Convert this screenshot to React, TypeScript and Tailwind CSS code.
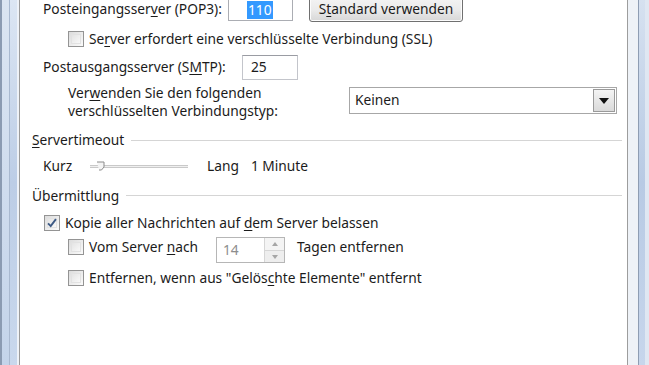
import React from "react";

const font = { fontFamily: '"Noto Sans", "Liberation Sans", sans-serif' };

function U({ children }: { children: React.ReactNode }) {
  return <span className="underline underline-offset-2 decoration-1">{children}</span>;
}

function Check({ checked = false }: { checked?: boolean }) {
  return (
    <span className="relative flex h-[16px] w-[16px] shrink-0 items-center justify-center border border-[#949494] bg-gradient-to-br from-[#dcdcdc] to-[#fbfbfb]">
      <span className="absolute inset-[2px] border border-[#e2e2e2] bg-gradient-to-br from-[#e4e4e4] to-[#f8f8f8]" />
      {checked && (
        <svg viewBox="0 0 16 16" className="relative h-[14px] w-[14px]">
          <path d="M3.5 8.5 L6.5 11.5 L12.5 3.5" fill="none" stroke="#3d5a85" strokeWidth="2.2" />
        </svg>
      )}
    </span>
  );
}

function GroupTitle({ children }: { children: React.ReactNode }) {
  return (
    <div className="flex items-center gap-[7px] pr-[5px]">
      <span>{children}</span>
      <span className="h-px flex-1 bg-[#d5d5d5]" />
    </div>
  );
}

export default function App() {
  return (
    <div className="flex h-[365px] w-[649px] overflow-hidden bg-white text-[13.75px] text-[#1b1b1b]" style={font}>
      <div className="flex w-[20px] shrink-0">
        <span className="w-[2px] bg-[#8b9bb2]" />
        <span className="w-[7px] bg-gradient-to-b from-[#dbe5f2] to-[#c4d4ea]" />
        <span className="w-px bg-[#a9b9d0]" />
        <span className="w-[7px] bg-gradient-to-b from-[#dce6f3] via-[#bccde6] to-[#c9d8ed]" />
        <span className="w-[2px] bg-[#eef2f8]" />
        <span className="w-px bg-[#9b9b9b]" />
      </div>

      <div className="flex min-w-0 flex-1 flex-col pl-[12px]">
        <div className="-mt-[3px] flex h-[25px] items-center">
          <span className="ml-[11px] w-[185px]">
            Posteingangsser<U>v</U>er (POP3):
          </span>
          <span className="flex h-[23px] w-[65px] items-center border border-[#abadb3] border-t-[#8a8c93] pl-[18px]">
            <span className="bg-[#3399ff] px-px leading-[18px] text-white">110</span>
          </span>
          <button className="ml-[16px] h-[25px] w-[154px] rounded-[3px] border border-[#707070] bg-gradient-to-b from-[#f3f3f3] via-[#ebebeb] to-[#d7d7d7] shadow-[inset_0_0_0_1px_#fcfcfc]">
            S<U>t</U>andard verwenden
          </button>
        </div>

        <div className="mt-[9px] flex h-[16px] items-center gap-[5px] pl-[36px]">
          <Check />
          <span>
            Se<U>r</U>ver erfordert eine verschlüsselte Verbindung (SSL)
          </span>
        </div>

        <div className="mt-[8px] flex h-[25px] items-center">
          <span className="ml-[11px] w-[199px]">
            Postausgangsserver (S<U>M</U>TP):
          </span>
          <span className="flex h-[25px] w-[56px] items-center border border-[#c3c5cb] border-t-[#9a9ca3] pl-[8px]">25</span>
        </div>

        <div className="mt-[4px] flex h-[36px] items-center">
          <div className="ml-[36px] w-[281px] leading-[18px]">
            <div>
              Ver<U>w</U>enden Sie den folgenden
            </div>
            <div>verschlüsselten Verbindungstyp:</div>
          </div>
          <div className="-mt-[3px] flex h-[27px] w-[268px] items-center justify-between border border-[#a7a7a7] pl-[5px] pr-[1px]">
            <span>Keinen</span>
            <span className="flex h-[23px] w-[22px] items-center justify-center border border-[#9a9a9a] bg-gradient-to-b from-[#f4f4f4] to-[#dadada]">
              <svg viewBox="0 0 10 6" className="h-[6px] w-[10px]">
                <path d="M0 0 H10 L5 6 Z" fill="#111" />
              </svg>
            </span>
          </div>
        </div>

        <div className="mt-[10px]">
          <GroupTitle>
            <U>S</U>ervertimeout
          </GroupTitle>
        </div>

        <div className="mt-[7px] flex h-[18px] items-center">
          <span className="ml-[11px] w-[47px]">Kurz</span>
          <span className="relative flex h-[18px] w-[98px] items-center">
            <span className="h-[3px] w-full border-y border-y-[#c9c9c9] bg-[#efefef]" />
            <svg viewBox="0 0 10 12" className="absolute left-[6px] top-[2px] h-[12px] w-[10px]">
              <path d="M1 2 H8 V7 L5.5 10 H3" fill="#f4f4f4" stroke="#8c8c8c" strokeWidth="1" />
            </svg>
          </span>
          <span className="ml-[19px]">Lang</span>
          <span className="ml-[12px]">1 Minute</span>
        </div>

        <div className="mt-[10px]">
          <GroupTitle>Übermittlung</GroupTitle>
        </div>

        <div className="mt-[9px] flex h-[16px] items-center gap-[5px] pl-[12px]">
          <Check checked />
          <span>
            Kopie aller Nachrichten auf <U>d</U>em Server belassen
          </span>
        </div>

        <div className="mt-[6px] flex h-[26px] items-start pl-[36px]">
          <span className="mt-[2px] flex h-[16px] items-center">
            <Check />
            <span className="ml-[5px] w-[127px]">
              Vom Server <U>n</U>ach
            </span>
          </span>
          <span className="flex h-[26px] w-[69px] items-center border border-[#b6b6b6] pl-[6px] text-[#8d8d8d]">
            <span className="flex-1">14</span>
            <span className="flex h-full w-[20px] flex-col border-l border-[#d6d6d6]">
              <span className="flex flex-1 items-center justify-center border-b border-[#d6d6d6] bg-[#f4f4f4]">
                <svg viewBox="0 0 6 4" className="h-[4px] w-[6px]">
                  <path d="M0 4 L3 0 L6 4 Z" fill="#a6a6a6" />
                </svg>
              </span>
              <span className="flex flex-1 items-center justify-center bg-[#eeeeee]">
                <svg viewBox="0 0 6 4" className="h-[4px] w-[6px]">
                  <path d="M0 0 L3 4 L6 0 Z" fill="#a6a6a6" />
                </svg>
              </span>
            </span>
          </span>
          <span className="ml-[12px] mt-[2px] flex h-[16px] items-center">Tagen entfernen</span>
        </div>

        <div className="mt-[7px] flex h-[16px] items-center gap-[5px] pl-[36px]">
          <Check />
          <span>
            Entfernen, wenn aus "Gelös<U>c</U>hte Elemente" entfernt
          </span>
        </div>
      </div>

      <div className="flex w-[22px] shrink-0">
        <span className="w-px bg-[#9d9d9d]" />
        <span className="w-[10px] bg-[#eef2f7]" />
        <span className="w-px bg-[#8e9db3]" />
        <span className="w-[6px] bg-gradient-to-b from-[#d6e1f0] via-[#b8cae4] to-[#c7d6ec]" />
        <span className="w-[4px] bg-[#dfe7f2]" />
      </div>
    </div>
  );
}
